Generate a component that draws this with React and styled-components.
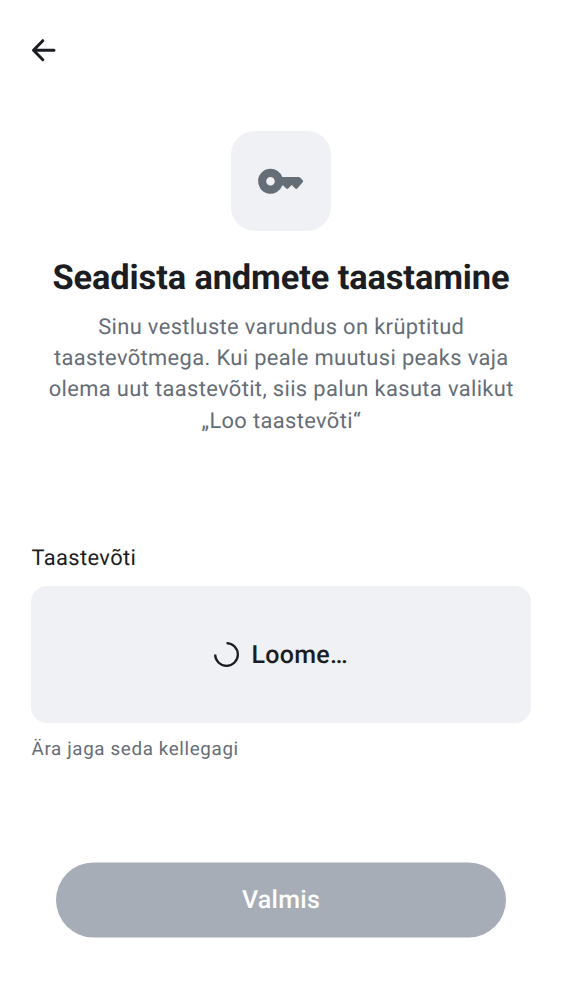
import React from 'react';
import styled, { createGlobalStyle } from 'styled-components';

const Global = createGlobalStyle`
  * { box-sizing: border-box; }
  body { margin: 0; background: #fff; font-family: Roboto, "Liberation Sans", sans-serif; color: #1b1d22; text-rendering: geometricPrecision; }
`;
const Screen = styled.main`
  width: 562px; height: 1000px; display: flex; flex-direction: column; padding: 0 31px;
`;
const BackButton = styled.button`
  width: 25px; height: 100px; padding: 0; border: 0; background: none; color: inherit;
  display: flex; align-items: center; justify-content: center;
`;
const Header = styled.header`
  display: flex; flex-direction: column; align-items: center; padding-top: 31px;
`;
const IconTile = styled.div`
  width: 100px; height: 100px; border-radius: 24px; background: #f0f1f5; color: #656d77;
  display: flex; align-items: center; justify-content: center;
`;
const Title = styled.h1`
  margin: 26.5px 0 0; font-size: 34.4px; line-height: 40px; font-weight: 700; white-space: nowrap; letter-spacing: -0.11px;
`;
const Description = styled.p`
  margin: 14.25px 0 0; padding-left: 0.5px; font-size: 21.875px; line-height: 31.25px; letter-spacing: 0.37px; text-align: center; color: #656d77;
  white-space: nowrap;
`;
const Field = styled.section`
  display: flex; flex-direction: column; margin-top: 105.75px;
`;
const Label = styled.div`
  padding-left: 0.5px; font-size: 21.875px; line-height: 32px; letter-spacing: 0.39px;
`;
const KeyBox = styled.div`
  height: 137px; margin-top: 11.5px; border-radius: 16px; background: #f0f1f5;
  display: flex; align-items: center; justify-content: center; gap: 12.5px;
  font-size: 25px; font-weight: 500; letter-spacing: 0.32px;
`;
const KeyBoxText = styled.span`
  padding-top: 1.5px;
`;
const Hint = styled.div`
  margin-top: 14px; padding-left: 0.5px; font-size: 18.75px; line-height: 25px; letter-spacing: 0.65px; color: #656d77;
`;
const DoneButton = styled.button`
  width: 450px; height: 75px; margin: auto auto 63px; padding: 0; border: 0; border-radius: 38px; background: #a6adb7; color: #fff;
  font: 500 25px/37px Roboto, "Liberation Sans", sans-serif; letter-spacing: 0.3px; text-rendering: inherit;
  transform: translateY(0.5px);
`;

export default function App() {
  return (
    <Screen>
      <Global />
      <BackButton aria-label="Tagasi">
        <svg width="25" height="25" viewBox="0 0 25 25" fill="none" stroke="currentColor" strokeWidth="3" strokeLinecap="round" strokeLinejoin="round">
          <path d="M23 12.2H3M11.8 2.7 2.5 12.2 11.8 21.7" />
        </svg>
      </BackButton>
      <Header>
        <IconTile>
          <svg width="50" height="50" viewBox="0 0 50 50" fill="currentColor">
            <path fillRule="evenodd" d="M14.5 12.7A12.5 12.5 0 0 1 26.3 21H42.6Q43.5 21 44.1 21.6L46.7 24.2Q47.7 25.2 46.7 26.3L41.2 32.5Q40.3 33.4 39.3 32.5L35.7 29L32.2 32.6Q31.3 33.5 30.3 32.6L27.2 29.4H26.3A12.5 12.5 0 1 1 14.5 12.7ZM14.5 20.9A4.3 4.3 0 1 0 14.5 29.5A4.3 4.3 0 1 0 14.5 20.9Z" />
          </svg>
        </IconTile>
        <Title>Seadista andmete taastamine</Title>
        <Description>
          Sinu vestluste varundus on krüptitud<br />
          taastevõtmega. Kui peale muutusi peaks vaja<br />
          olema uut taastevõtit, siis palun kasuta valikut<br />
          „Loo taastevõti“
        </Description>
      </Header>
      <Field>
        <Label>Taastevõti</Label>
        <KeyBox>
          <svg width="25" height="25" viewBox="0 0 25 25" fill="none" stroke="currentColor" strokeWidth="2.3">
            <path d="M12.5 1.15A11.35 11.35 0 1 1 1.15 12.5" />
          </svg>
          <KeyBoxText>Loome…</KeyBoxText>
        </KeyBox>
        <Hint>Ära jaga seda kellegagi</Hint>
      </Field>
      <DoneButton>Valmis</DoneButton>
    </Screen>
  );
}
